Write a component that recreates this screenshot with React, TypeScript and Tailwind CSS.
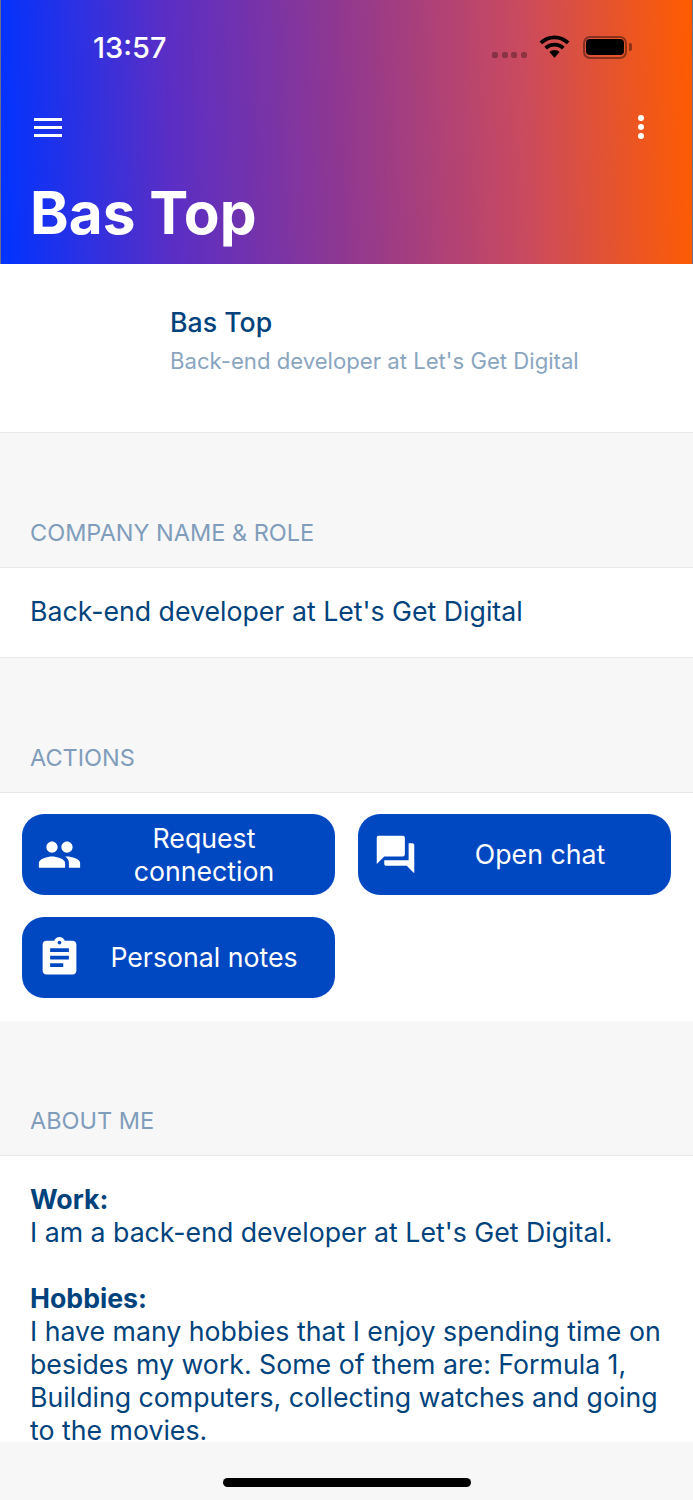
import type { ReactNode } from "react";

const PEOPLE =
  "M16 11c1.66 0 2.99-1.34 2.99-3S17.66 5 16 5c-1.66 0-3 1.34-3 3s1.34 3 3 3zm-8 0c1.66 0 2.99-1.34 2.99-3S9.66 5 8 5C6.34 5 5 6.34 5 8s1.34 3 3 3zm0 2c-2.33 0-7 1.17-7 3.5V19h14v-2.5c0-2.33-4.67-3.5-7-3.5zm8 0c-.29 0-.62.02-.97.05 1.16.84 1.97 1.97 1.97 3.45V19h6v-2.5c0-2.33-4.67-3.5-7-3.5z";
const FORUM =
  "M21 6h-2v9H6v2c0 .55.45 1 1 1h11l4 4V7c0-.55-.45-1-1-1zm-4 6V3c0-.55-.45-1-1-1H3c-.55 0-1 .45-1 1v14l4-4h10c.55 0 1-.45 1-1z";
const NOTES =
  "M19 3h-4.18C14.4 1.84 13.3 1 12 1c-1.3 0-2.4.84-2.82 2H5c-1.1 0-2 .9-2 2v14c0 1.1.9 2 2 2h14c1.1 0 2-.9 2-2V5c0-1.1-.9-2-2-2zm-7 0c.55 0 1 .45 1 1s-.45 1-1 1-1-.45-1-1 .45-1 1-1zm2 14H7v-2h7v2zm3-4H7v-2h10v2zm0-4H7V7h10v2z";

function StatusIcons() {
  return (
    <div className="flex items-center">
      <div className="mt-[15px] flex gap-[3.6px]">
        <span className="size-[6px] rounded-[2px] bg-black/30" />
        <span className="size-[6px] rounded-[2px] bg-black/30" />
        <span className="size-[6px] rounded-[2px] bg-black/30" />
        <span className="size-[6px] rounded-[2px] bg-black/30" />
      </div>
      <svg viewBox="0 0 32 24" className="ml-[12px] h-[24px] w-[31px]">
        <path
          d="M16 0C10 0 4.700 2.300.5 6.200l2.800 3C6.800 6 11.200 4 16 4s9.200 2 12.700 5.200l2.800-3C27.300 2.300 22 0 16 0zm0 7.500c-4 0-7.700 1.600-10.500 4.200l2.800 3C10.300 12.800 13 11.600 16 11.600s5.700 1.200 7.700 3.100l2.800-3C23.700 9.100 20 7.500 16 7.500zm0 7.600c-2 0-3.900.800-5.300 2.100L16 23l5.300-5.800c-1.400-1.300-3.300-2.100-5.300-2.100z"
          fill="#000"
        />
      </svg>
      <div className="ml-[13px] flex items-center">
        <div className="flex h-[23px] w-[44px] items-center justify-center rounded-[7px] border-2 border-black/40">
          <div className="h-[16px] w-[38px] rounded-[4px] bg-black" />
        </div>
        <div className="ml-[2px] h-[8px] w-[3px] rounded-r-[2px] bg-black/40" />
      </div>
    </div>
  );
}

function Header() {
  return (
    <header className="h-[264px] shrink-0 border-x border-[#6d6d8c] bg-[linear-gradient(88deg,#0033ff_0%,#5b2ec4_25%,#91388f_50%,#c94a60_75%,#ff5c00_100%)] text-white">
      <div className="flex h-[94px] items-center justify-between pr-[60px] pl-[92px]">
        <span className="text-[29px] leading-none font-medium">13:57</span>
        <StatusIcons />
      </div>
      <div className="flex h-[66px] items-center justify-between pr-[48px] pl-[33px]">
        <div className="flex w-[28px] flex-col gap-[5px]">
          <span className="h-[3px] bg-white" />
          <span className="h-[3px] bg-white" />
          <span className="h-[3px] bg-white" />
        </div>
        <div className="flex flex-col gap-[3px]">
          <span className="size-[6px] rounded-full bg-white" />
          <span className="size-[6px] rounded-full bg-white" />
          <span className="size-[6px] rounded-full bg-white" />
        </div>
      </div>
      <h1 className="pt-[16px] pl-[29px] text-[58.5px] leading-[74px] font-bold">Bas Top</h1>
    </header>
  );
}

function SectionLabel({ children }: { children: ReactNode }) {
  return (
    <div className="flex h-[134px] items-end bg-[#f7f7f7] px-[30px] pb-[20px] text-[23.5px] leading-[28px] text-[#7f9dbb] uppercase">
      {children}
    </div>
  );
}

function ActionButton({ icon, children }: { icon: string; children: ReactNode }) {
  return (
    <button className="flex h-[81px] items-center rounded-[22px] bg-[#0047c2] pr-[8.5px] pl-[14.5px] text-[26.7px] leading-[33px] text-white">
      <svg viewBox="0 0 24 24" className="size-[45px] shrink-0" fill="#fff">
        <path d={icon} />
      </svg>
      <span className="flex-1 text-center">{children}</span>
    </button>
  );
}

export default function App() {
  return (
    <div className="flex h-[1500px] flex-col overflow-hidden bg-[#f7f7f7] font-['Inter',sans-serif] text-[#00437c]">
      <Header />

      <main className="min-h-0 flex-1 overflow-hidden">
        <section className="flex h-[169px] flex-col border-b border-[#e8e8e8] bg-white pt-[42px] pl-[170px]">
          <p className="text-[26.7px] leading-[33px] font-medium">Bas Top</p>
          <p className="mt-[9px] text-[22.15px] leading-[27px] text-[#8aa5c0]">
            Back-end developer at Let's Get Digital
          </p>
        </section>

        <SectionLabel>Company name &amp; role</SectionLabel>
        <section className="h-[91px] border-y border-[#e8e8e8] bg-white px-[30px] pt-[27px] text-[26.7px] leading-[33px]">
          Back-end developer at Let's Get Digital
        </section>

        <SectionLabel>Actions</SectionLabel>
        <section className="grid grid-cols-2 gap-x-[23px] gap-y-[22px] border-t border-[#e8e8e8] bg-white px-[22px] pt-[21px] pb-[23px]">
          <ActionButton icon={PEOPLE}>
            Request
            <br />
            connection
          </ActionButton>
          <ActionButton icon={FORUM}>Open chat</ActionButton>
          <ActionButton icon={NOTES}>Personal notes</ActionButton>
        </section>

        <SectionLabel>About me</SectionLabel>
        <section className="border-t border-[#e8e8e8] bg-white px-[30px] pt-[27px] pb-[30px] text-[26.7px] leading-[33px]">
          <p className="font-bold">Work:</p>
          <p>I am a back-end developer at Let's Get Digital.</p>
          <p className="mt-[33px] font-bold">Hobbies:</p>
          <p>
            I have many hobbies that I enjoy spending time on besides my work. Some of them are:
            Formula 1, Building computers, collecting watches and going to the movies.
          </p>
        </section>
      </main>

      <footer className="flex h-[58px] shrink-0 items-start justify-center bg-[#f7f7f7] pt-[36px]">
        <div className="h-[9px] w-[248px] rounded-full bg-black" />
      </footer>
    </div>
  );
}
